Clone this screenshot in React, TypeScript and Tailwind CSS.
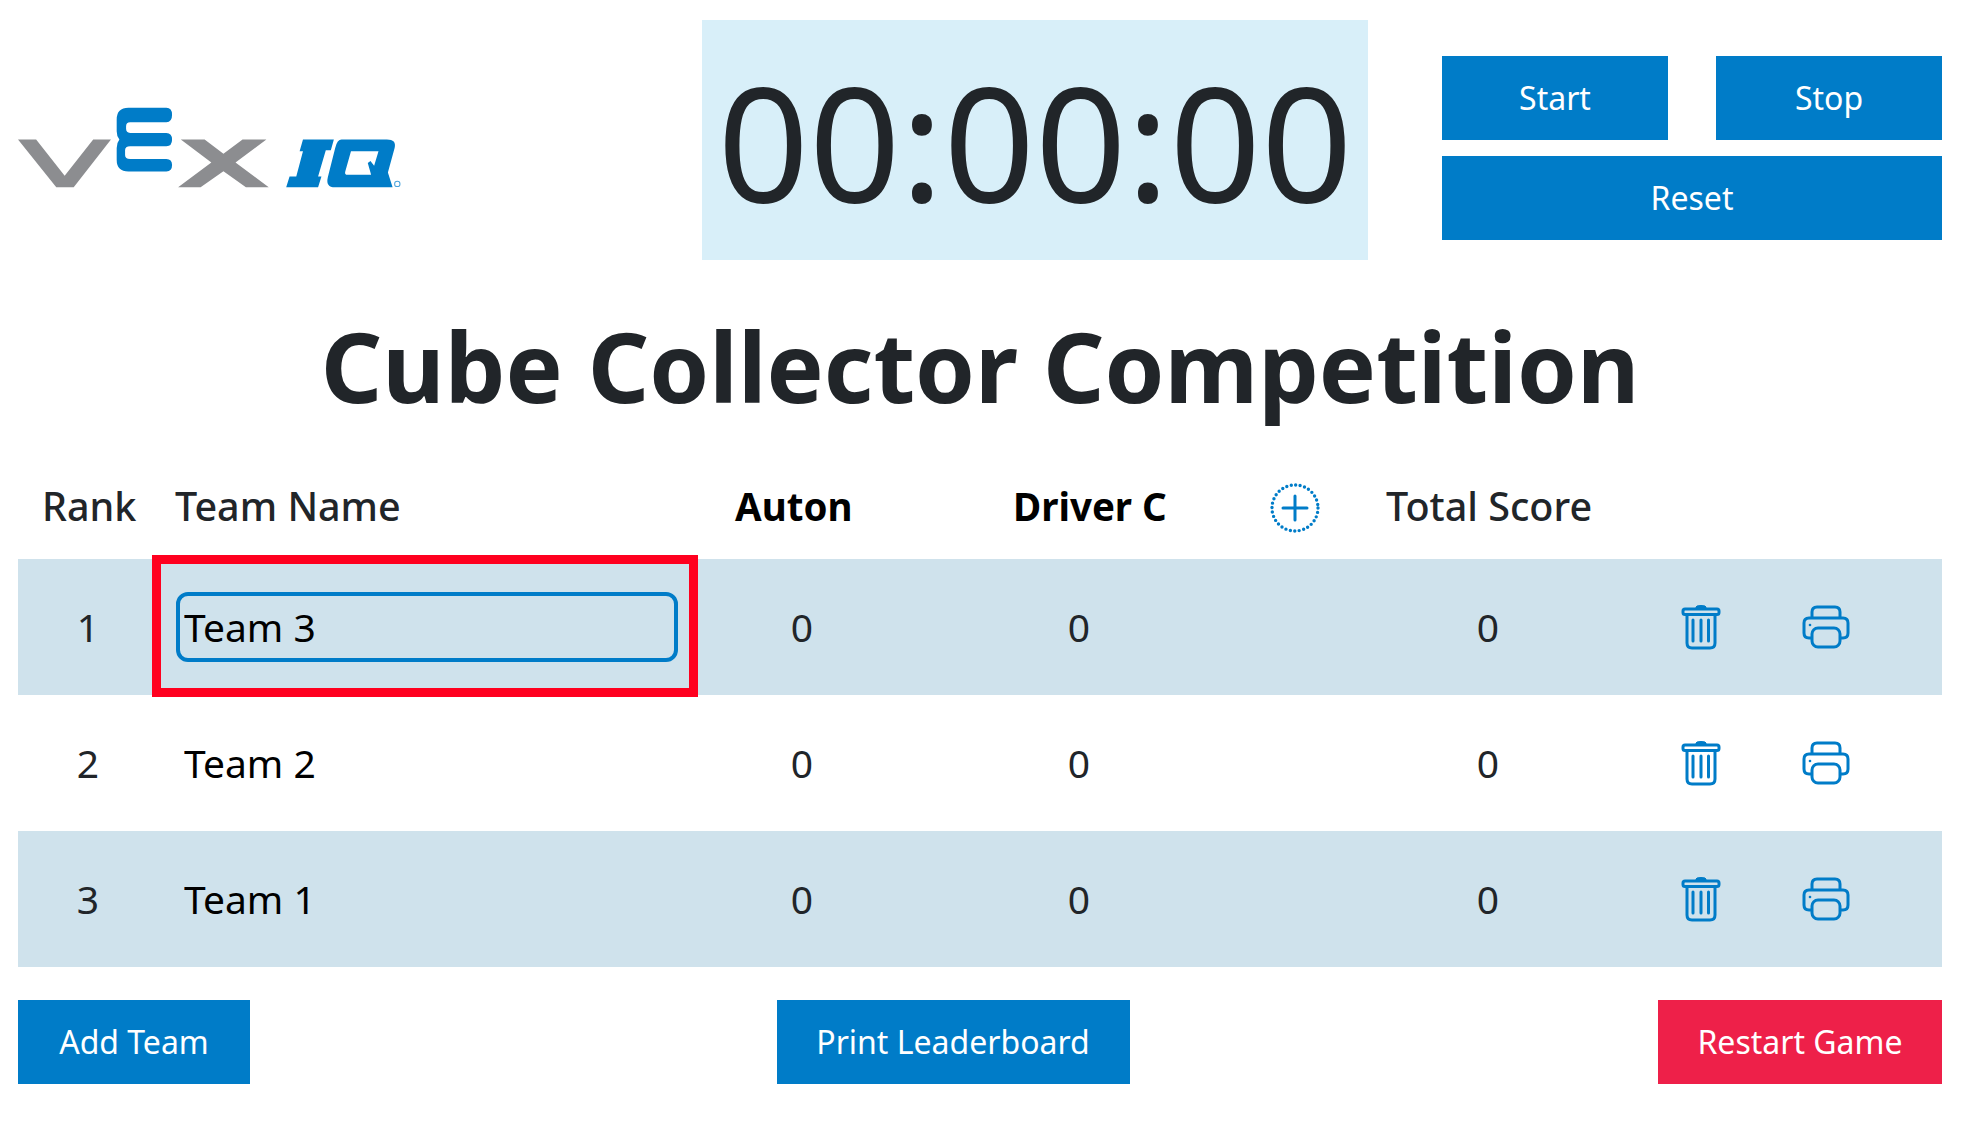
import React from 'react';

const gridCols = 'grid grid-cols-[134px_546px_208px_346px_84px_304px_122px_128px_52px] items-center';

const VexLogo = () => (
  <svg viewBox="56 80 1144 250" className="w-[384px] h-[84px] shrink-0">
    <polygon points="56,180 110,180 195,288 280,180 333,180 222,322 170,322" fill="#8c8d90" />
    <polygon
      points="541,180 612,180 668,222 725,180 796,180 704,248 803,322 735,322 668,274 600,322 533,322 632,248"
      fill="#8c8d90"
    />
    <path
      d="M385 85 H498 Q515 85 515 106 Q515 128 498 128 H390 Q378 128 378 140 V148 Q378 160 390 160 H498 Q515 160 515 180 Q515 200 498 200 H390 Q375 200 375 212 V226 Q375 238 390 238 H498 Q515 238 515 256 Q515 275 498 275 H385 Q350 275 350 240 V205 Q350 190 358 180 Q350 170 350 155 V120 Q350 85 385 85 Z"
      fill="#007cc8"
    />
    <polygon
      points="905,180 997,180 988,212 973,212 950,290 960,290 950,322 855,322 865,290 885,290 905,215 895,215"
      fill="#007cc8"
    />
    <path
      fillRule="evenodd"
      d="M1020 180 H1155 Q1184 180 1178 205 L1158 278 L1172 322 H1000 Q972 322 979 292 L1001 205 Q1007 180 1020 180 Z M1048 215 H1130 L1117 258 L1106 244 L1098 250 L1108 285 H1038 Q1028 285 1031 275 Z"
      fill="#007cc8"
    />
    <circle cx="1186" cy="312" r="8" fill="none" stroke="#4aa3dc" strokeWidth="3" />
  </svg>
);

const PlusIcon = () => (
  <svg viewBox="0 0 50 50" className="w-[50px] h-[50px]">
    <circle
      cx="25"
      cy="25"
      r="23"
      fill="none"
      stroke="#007cc8"
      strokeWidth="3.4"
      strokeLinecap="round"
      strokeDasharray="0 4.516"
    />
    <path d="M25 13 V37 M13 25 H37" stroke="#007cc8" strokeWidth="3" strokeLinecap="round" />
  </svg>
);

const TrashIcon = () => (
  <svg viewBox="0 0 40 46" className="w-[40px] h-[46px]" fill="none" stroke="#007cc8" strokeWidth="3">
    <path d="M15 3 Q15 1.500 20 1.500 Q25 1.500 25 3 V5 H15 Z" fill="#007cc8" strokeWidth="1" />
    <rect x="2" y="5" width="36" height="5.500" rx="2" />
    <path d="M6 10.500 V39 Q6 44 11 44 H29 Q34 44 34 39 V10.500" />
    <path d="M12 16 V37 M20 16 V37 M27.500 16 V37" strokeLinecap="round" />
  </svg>
);

const PrinterIcon = () => (
  <svg viewBox="0 0 48 44" className="w-[48px] h-[44px]" fill="none" stroke="#007cc8" strokeWidth="3">
    <path d="M10 13 V7 Q10 2 15 2 H33 Q38 2 38 7 V13" />
    <path d="M10 33 H7 Q2 33 2 28 V18 Q2 13 7 13 H41 Q46 13 46 18 V28 Q46 33 41 33 H38" />
    <rect x="10" y="23" width="28" height="19" rx="6" />
    <circle cx="8" cy="20" r="1.300" fill="#007cc8" stroke="none" />
  </svg>
);

const teams = [
  { rank: 1, name: 'Team 3', shaded: true, focused: true },
  { rank: 2, name: 'Team 2', shaded: false, focused: false },
  { rank: 3, name: 'Team 1', shaded: true, focused: false },
];

const btn = 'h-[84px] bg-[#007cc8] text-white text-[32px] flex items-center justify-center';

export default function App() {
  return (
    <div className="w-[1976px] h-[1144px] overflow-hidden bg-white pl-[18px] pr-[34px] pt-[20px] text-[#212529] font-['Noto_Sans','Open_Sans',sans-serif]">
      <header className="flex items-start">
        <div className="pt-[86px] w-[384px] shrink-0">
          <VexLogo />
        </div>
        <div className="ml-[300px] w-[666px] h-[240px] shrink-0 bg-[#d8eff9] flex items-center justify-center text-[160px] leading-none">
          00:00:00
        </div>
        <div className="ml-[74px] w-[500px] pt-[36px] grid grid-cols-2 gap-x-[48px] gap-y-[16px]">
          <button className={btn}>Start</button>
          <button className={btn}>Stop</button>
          <button className={`${btn} col-span-2`}>Reset</button>
        </div>
      </header>

      <h1 className="mt-[38px] text-center text-[96px] leading-[136px] font-bold">Cube Collector Competition</h1>

      <div className={`${gridCols} mt-[34px] mb-[11px] h-[80px] text-[39.500px] font-medium`}>
        <div className="pl-[24px] pb-[2px]">Rank</div>
        <div className="pl-[23px] pb-[2px]">Team Name</div>
        <div className="pl-[37px] pb-[2px] text-[38.500px] font-bold text-black">Auton</div>
        <div className="pl-[107px] pb-[2px] text-[38.500px] font-bold text-black whitespace-nowrap">Driver C</div>
        <div className="flex justify-center pl-[2px]">
          <PlusIcon />
        </div>
        <div className="pl-[50px] pb-[2px] whitespace-nowrap">Total Score</div>
      </div>

      {teams.map((team) => (
        <div
          key={team.rank}
          className={`${gridCols} h-[136px] text-[39px] ${team.shaded ? 'bg-[#cfe2ec]' : 'bg-white'}`}
        >
          <div className="pl-[6px] text-center">{team.rank}</div>
          <div className="relative h-full flex items-center pl-[24px] pr-[20px]">
            <input
              defaultValue={team.name}
              className={`w-full h-[70px] pl-[4px] pb-[2px] rounded-[12px] border-[4px] text-black outline-none bg-transparent ${
                team.focused ? 'border-[#007cc8]' : 'border-transparent'
              }`}
            />
            {team.focused && <div className="absolute -top-[4px] -bottom-[2px] inset-x-0 border-[9px] border-[#ff001f]" />}
          </div>
          <div className="text-center">0</div>
          <div className="text-center">0</div>
          <div />
          <div className="text-center">0</div>
          <div className="flex justify-center">
            <TrashIcon />
          </div>
          <div className="flex justify-center">
            <PrinterIcon />
          </div>
        </div>
      ))}

      <div className="mt-[33px] flex justify-between">
        <button className={`${btn} w-[232px]`}>Add Team</button>
        <button className={`${btn} w-[353px] mr-[2px]`}>Print Leaderboard</button>
        <button className={`${btn} w-[284px] bg-[#ee2049]`}>Restart Game</button>
      </div>
    </div>
  );
}
